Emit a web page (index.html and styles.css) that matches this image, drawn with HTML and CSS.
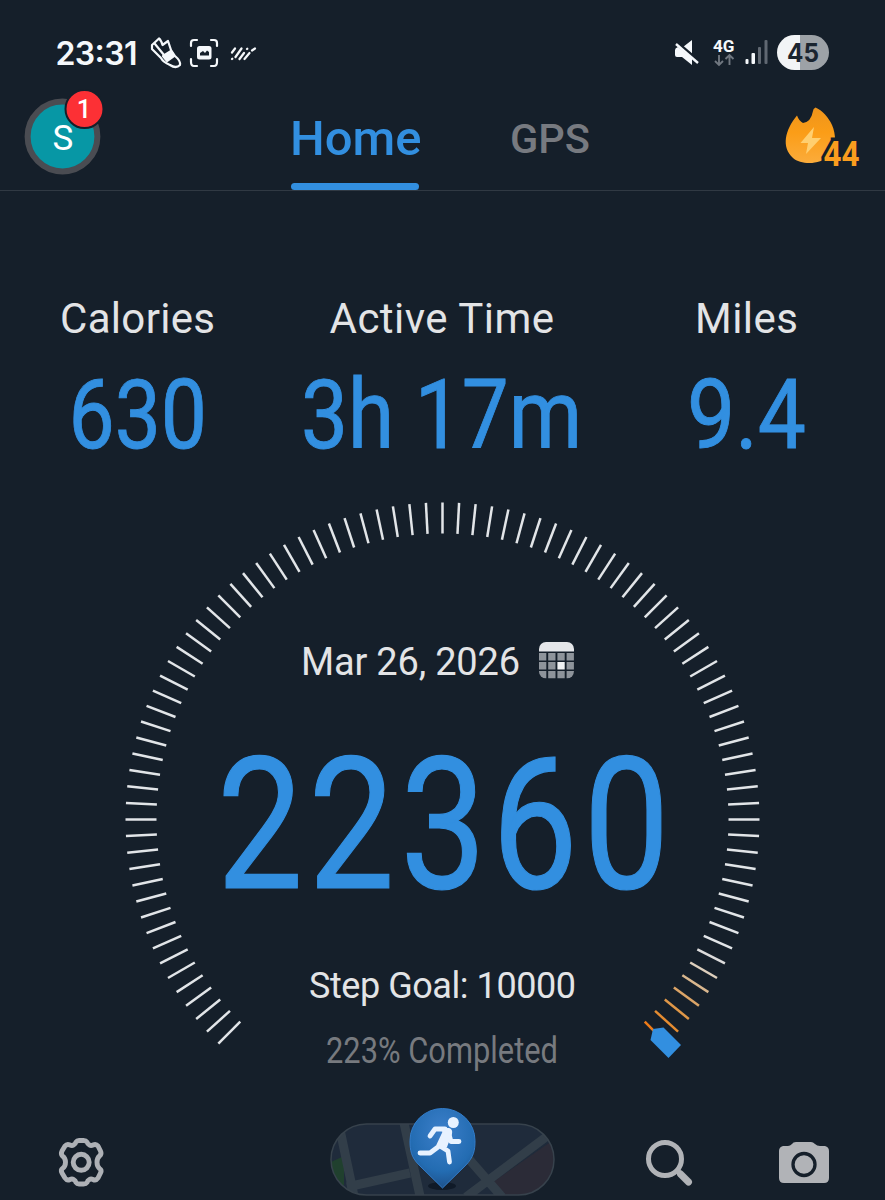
FILE: index.html
```html
<!DOCTYPE html>
<html lang="en">
<head>
<meta charset="utf-8">
<meta name="viewport" content="width=device-width">
<title>Step counter</title>
<link rel="stylesheet" href="styles.css">
</head>
<body>
<main class="screen">
  <div class="status">
    <svg class="status-left" width="230" height="60" viewBox="40 25 230 60">
      <text class="clock" x="55.500" y="64.500" textLength="82">23:31</text>
      <g class="line">
        <path d="M152 45 L159 38.500 Q161 40 162.500 45 L168 41 L171 50 L175 56 Q181 61 180 65 Q176 69 170 65 Q163 62 161 58 L152 49Z"/>
        <path d="M155 44 L164 55"/>
        <path class="solid" d="M163 56 L171 51 L174 56 L167 61Z"/>
        <path d="M191 46 V43 Q191 40 194 40 H197 M211 40 H214 Q217 40 217 43 V46 M217 59 V62 Q217 66 214 66 H211 M197 66 H194 Q191 66 191 62 V59"/>
      </g>
      <rect x="197" y="46" width="14.500" height="13.500" rx="2.500" fill="#f5f8fb"/>
      <path d="M200 55.500 V53 L203 51 L205 53 L207 50.500 L209 52 V55.500Z" fill="#151f2a"/>
      <path class="dashes" d="M232 52.500 L235 48.500 M232 59 L232.300 58.700 M235.500 57 L241.500 48.500 M239.500 59 L244 53 M247 49 L247.300 48.700 M244.500 59 L249.500 53 M252 50.500 L255 48.500"/>
    </svg>
    <svg class="status-right" width="190" height="60" viewBox="660 25 190 60">
      <path class="white" d="M683 47 L692 40 V54Z M675 50 Q675 48 678 47 L692 58 V65 L682 57 H677 Q675 57 675 55Z"/>
      <path d="M677 43 L698 61" stroke="#151f2a" stroke-width="4"/>
      <path d="M676 44 L698 63" stroke="#f5f8fb" stroke-width="2.400"/>
      <text class="net" x="713" y="52" textLength="21.500" lengthAdjust="spacingAndGlyphs">4G</text>
      <path class="arrows" d="M719 55 V65 M715 61 L719 65 L723 61 M729.500 65 V55 M725.500 59 L729.500 55 L733.500 59"/>
      <g fill="#f5f8fb"><rect x="745.500" y="59" width="3" height="5" rx="1"/><rect x="751.500" y="53" width="3.500" height="11" rx="1"/></g>
      <g fill="#606872"><rect x="758" y="47" width="3" height="17" rx="1"/><rect x="764.500" y="40" width="3" height="24" rx="1"/></g>
      <path d="M800 35 H794.500 A17.500 17.500 0 0 0 794.500 70 H800Z" fill="#f2f4f6"/>
      <path d="M800 35 H811.500 A17.500 17.500 0 0 1 811.500 70 H800Z" fill="#9da2a7"/>
      <text class="battery" x="787" y="62" textLength="32" lengthAdjust="spacingAndGlyphs">45</text>
    </svg>
  </div>

  <header class="top">
    <svg class="avatar" width="90" height="95" viewBox="20 85 90 95" role="img" aria-label="Profile">
      <circle cx="62.500" cy="136.500" r="34.900" fill="#0797a5" stroke="#4a4c52" stroke-width="6"/>
      <text class="initial" x="63" y="149.500" text-anchor="middle">S</text>
      <circle cx="84.500" cy="109" r="19" fill="#fc3035" stroke="#151f2a" stroke-width="2"/>
      <text class="badge" x="84" y="118" text-anchor="middle">1</text>
    </svg>
    <nav class="tabs">
      <svg class="tab" width="150" height="100" viewBox="280 100 150 100"><text class="tab-home" x="290" y="154.500" textLength="131.500" lengthAdjust="spacingAndGlyphs">Home</text><rect x="291" y="183" width="128" height="7" rx="3.500" fill="#328fe0"/></svg>
      <svg class="tab" width="100" height="100" viewBox="500 100 100 100"><text class="tab-gps" x="510" y="152.500" textLength="80" lengthAdjust="spacingAndGlyphs">GPS</text></svg>
    </nav>
    <svg class="streak" width="105" height="85" viewBox="780 95 105 85">
      <defs><linearGradient id="fire" x2="0" y2="1"><stop stop-color="#ee941b"/><stop offset=".45" stop-color="#fb9d17"/><stop offset="1" stop-color="#fbac3b"/></linearGradient></defs>
      <path d="M797 115.500 Q799 121 803 123 Q811 122 813 111 Q813 108.500 815.500 107.500 C822 110 829 118 832 125 C836 134 837 147 829 156 C820 165 801 165 793 158 C781 147 785 130 797 115.500Z" fill="url(#fire)"/>
      <path d="M814 127 L800.500 143 H808 L806 154 L821 138 H812Z" fill="#ffcf70"/>
      <text class="streak-count" x="823.500" y="165.500" textLength="36" lengthAdjust="spacingAndGlyphs">44</text>
    </svg>
  </header>

  <section class="stats">
    <div class="stat"><svg width="295" height="200" viewBox="0 280 295 200"><text class="label" x="60" y="333" textLength="155">Calories</text><text class="value" x="68.500" y="448" textLength="138.500" lengthAdjust="spacingAndGlyphs">630</text></svg></div>
    <div class="stat"><svg width="295" height="200" viewBox="295 280 295 200"><text class="label" x="329.500" y="333" textLength="224.500">Active Time</text><text class="value" x="301" y="448" textLength="281" lengthAdjust="spacingAndGlyphs">3h 17m</text></svg></div>
    <div class="stat"><svg width="295" height="200" viewBox="590 280 295 200"><text class="label" x="695" y="333" textLength="103">Miles</text><text class="value" x="687" y="448" textLength="119" lengthAdjust="spacingAndGlyphs">9.4</text></svg></div>
  </section>

  <section class="gauge">
    <svg width="885" height="610" viewBox="0 480 885 610">
      <g id="ticks" class="ticks"></g>
      <path d="M653 1029 L663.500 1027.500 L681 1045 L668.500 1058 L650.500 1040Z" fill="#328fe0"/>
      <text class="date" x="301" y="675" textLength="219">Mar 26, 2026</text>
      <clipPath id="cal"><rect x="539" y="642" width="35" height="36.500" rx="7"/></clipPath>
      <g id="calendar" clip-path="url(#cal)"><rect x="539" y="642" width="35" height="9.500" fill="#e4e6e9"/></g>
      <text class="steps" transform="translate(217 887.500) scale(.837 1)">22360</text>
      <text class="goal" x="309" y="997.500" textLength="267">Step Goal: 10000</text>
      <text class="done" x="326" y="1062.500" textLength="232" lengthAdjust="spacingAndGlyphs">223% Completed</text>
    </svg>
  </section>

  <footer class="bottom">
    <svg width="110" height="110" viewBox="30 1090 110 110"><g class="gear"><path d="M73.500 1145 Q75.500 1144 76 1142 Q77 1140.500 79 1140.500 H83.500 Q86 1140.500 87 1142 Q87.500 1144 89.500 1145 Q91 1146 93 1145 Q96 1143.500 98 1146 L100.500 1151 Q102 1154 99.500 1156 Q97 1158 97 1162.300 Q97 1166.500 99.500 1168.500 Q102 1170 100.500 1173 L98 1178 Q96 1181 93 1179.500 Q91 1178.500 89.500 1179.500 Q87.500 1180.500 87 1182.500 Q86 1184 83.500 1184 H79 Q77 1184 76 1182.500 Q75.500 1180.500 73.500 1179.500 Q72 1178.500 70 1179.500 Q67 1181 65 1178 L62 1173 Q60.500 1170 62.500 1168.500 Q65.500 1166.500 65.500 1162.300 Q65.500 1158 62.500 1156 Q60.500 1154 62 1151 L65 1146 Q67 1143.500 70 1145 Q72 1146 73.500 1145Z"/><circle cx="81.200" cy="1162.300" r="8"/></g></svg>
    <svg class="map" width="245" height="110" viewBox="320 1090 245 110">
      <defs><clipPath id="pill"><rect x="331" y="1124" width="223" height="71" rx="35.500"/></clipPath><radialGradient id="pin" cx=".5" cy=".3" r=".7"><stop stop-color="#3c7fca"/><stop offset=".7" stop-color="#236cb2"/><stop offset="1" stop-color="#1e528c"/></radialGradient></defs>
      <g clip-path="url(#pill)"><rect x="331" y="1124" width="223" height="71" fill="#1f2b3b"/><path d="M331 1162 L344 1156 V1185 H331Z" fill="#20402e"/><path d="M556 1138 L493 1182 L505 1195 H556Z" fill="#2b2b37"/><g class="roads"><path d="M339 1125 L354 1196 M347 1187 L410 1173 M404 1123 L420 1196 M468 1158 L502 1197 M466 1197 L554 1131"/></g></g>
      <rect x="331" y="1124" width="223" height="71" rx="35.500" fill="none" stroke="#37424c" stroke-width="1.500"/>
      <ellipse cx="442" cy="1186" rx="14" ry="4" fill="#101a28"/>
      <path d="M442.500 1188 L419 1165 C411 1157 410 1150 410 1140.500 A32.500 32 0 0 1 475 1140.500 C475 1150 474 1157 465 1166Z" fill="url(#pin)" stroke="#327dcb" stroke-width="1"/>
      <circle cx="453.300" cy="1122.500" r="5.500" fill="#e8f2ff"/>
      <g class="runner"><path d="M446 1130 L438 1147 L430 1153 H420 M445 1129 H435 L430 1136 M448 1131 L451 1141.500 H459 M440 1146 L448 1151 L449.500 1162"/><path d="M437 1128 H449 Q453 1129 452 1134 L447 1147 L436 1148 L443 1132Z" fill="#e8f2ff" stroke="none"/></g>
    </svg>
    <svg width="220" height="110" viewBox="630 1090 220 110">
      <circle cx="665" cy="1159" r="16.500" fill="none" stroke="#b1b3b7" stroke-width="5"/><path d="M676.500 1170.500 L680 1173" stroke="#b1b3b7" stroke-width="5"/><path d="M680.500 1174 L688.500 1182" stroke="#b1b3b7" stroke-width="7" stroke-linecap="round"/>
      <path d="M783 1146 H788 Q790 1146 792 1144 Q793 1142 796 1142 H811 Q813 1142 815 1144 Q817 1146 820 1146 H825 Q829 1147 829 1151 V1178 Q829 1183 824 1183 H784 Q779 1183 779 1178 V1151 Q779 1147 783 1146Z" fill="#b1b3b7"/><circle cx="804" cy="1164.500" r="11" fill="none" stroke="#151f2a" stroke-width="3.300"/>
    </svg>
  </footer>
</main>
<script src="gauge.js"></script>
</body>
</html>
```
FILE: styles.css
```css
body { margin: 0; background: #151f2a; font-family: Roboto, "Liberation Sans", sans-serif; }
svg { display: block; flex: none; overflow: visible; }
.screen { width: 885px; height: 1200px; overflow: hidden; display: flex; flex-direction: column; background: #151f2a; }
.status { height: 60px; padding: 25px 35px 0 40px; display: flex; justify-content: space-between; }
.clock { font: 600 32px Inter, Roboto, sans-serif; fill: #f5f8fb; }
.line { fill: none; stroke: #f5f8fb; stroke-width: 2.2; stroke-linejoin: round; stroke-linecap: round; }
.line .solid { fill: #f5f8fb; }
.dashes { fill: none; stroke: #f5f8fb; stroke-width: 2.2; stroke-linecap: round; }
.white { fill: #f5f8fb; }
.net { font: 700 16.5px Roboto, sans-serif; fill: #f5f8fb; }
.arrows { fill: none; stroke: #707780; stroke-width: 1.9; }
.battery { font: 700 26px Inter, Roboto, sans-serif; fill: #1b2530; }
.top { height: 105px; padding: 0 0 0 20px; display: flex; border-bottom: 1px solid #303943; }
.tabs { display: flex; gap: 70px; padding-top: 15px; margin-left: 170px; height: 91px; }
.streak { margin: 10px 0 0 auto; }
.initial { font-size: 35px; fill: #fff; }
.badge { font-size: 25.5px; font-weight: 500; fill: #fff; }
.tab-home { font-size: 49px; font-weight: 500; fill: #328fe0; }
.tab-gps { font-size: 40.5px; font-weight: 500; fill: #777a80; }
.streak-count { font-size: 35.5px; font-weight: 700; fill: #fb9d1e; stroke: #151f2a; stroke-width: 7px; paint-order: stroke; }
.stats { display: flex; padding-top: 89px; }
.label { font-size: 42px; fill: #e3e4e6; }
.value { font-size: 96px; fill: #328fe0; stroke: #328fe0; stroke-width: .9px; }
.ticks { stroke-width: 2.5; }
.date { font-size: 38px; fill: #e3e4e6; }
.steps { font-size: 183px; letter-spacing: 6.6px; fill: #328fe0; stroke: #328fe0; stroke-width: 1.2px; }
.goal { font-size: 36px; fill: #e3e4e6; }
.done { font-size: 36px; fill: #777a7f; }
.bottom { display: flex; justify-content: space-between; padding: 0 35px 0 30px; }
.map { margin-left: 115px; }
.gear { fill: none; stroke: #aeb1b6; stroke-width: 4.9; stroke-linejoin: round; }
.roads { fill: none; stroke: #323e49; stroke-width: 9; }
.runner { fill: none; stroke: #e8f2ff; stroke-width: 4.8; stroke-linecap: round; stroke-linejoin: round; }
```
FILE: gauge.js
```js
const NS = 'http://www.w3.org/2000/svg';
const add = (parent, tag, attrs) => {
  const node = document.createElementNS(NS, tag);
  for (const key in attrs) node.setAttribute(key, attrs[key]);
  parent.appendChild(node);
};

// 91 ticks across 270 degrees, warming towards the marker.
const warm = ['#dddcdc', '#ddcfbd', '#d9b78e', '#dba467', '#df9748', '#e58c31', '#ef7b18'];
for (let i = 0; i < 91; i++) {
  const a = (-135 + i * 3) * Math.PI / 180;
  const outer = i === 90 ? 301 : 317;
  add(document.getElementById('ticks'), 'line', {
    x1: 442.5 + 286 * Math.sin(a), y1: 819.5 - 286 * Math.cos(a),
    x2: 442.5 + outer * Math.sin(a), y2: 819.5 - outer * Math.cos(a),
    stroke: i > 83 ? warm[i - 84] : '#e2e5e8'
  });
}

// Day grid of the calendar icon.
for (let row = 0; row < 3; row++)
  for (let col = 0; col < 4; col++)
    add(document.getElementById('calendar'), 'rect', {
      x: 539 + col * 9.2, y: 653 + row * 9, width: 7.3, height: 7.5,
      fill: row === 1 && col === 2 ? '#f0f2f4' : '#8e949b'
    });
```
